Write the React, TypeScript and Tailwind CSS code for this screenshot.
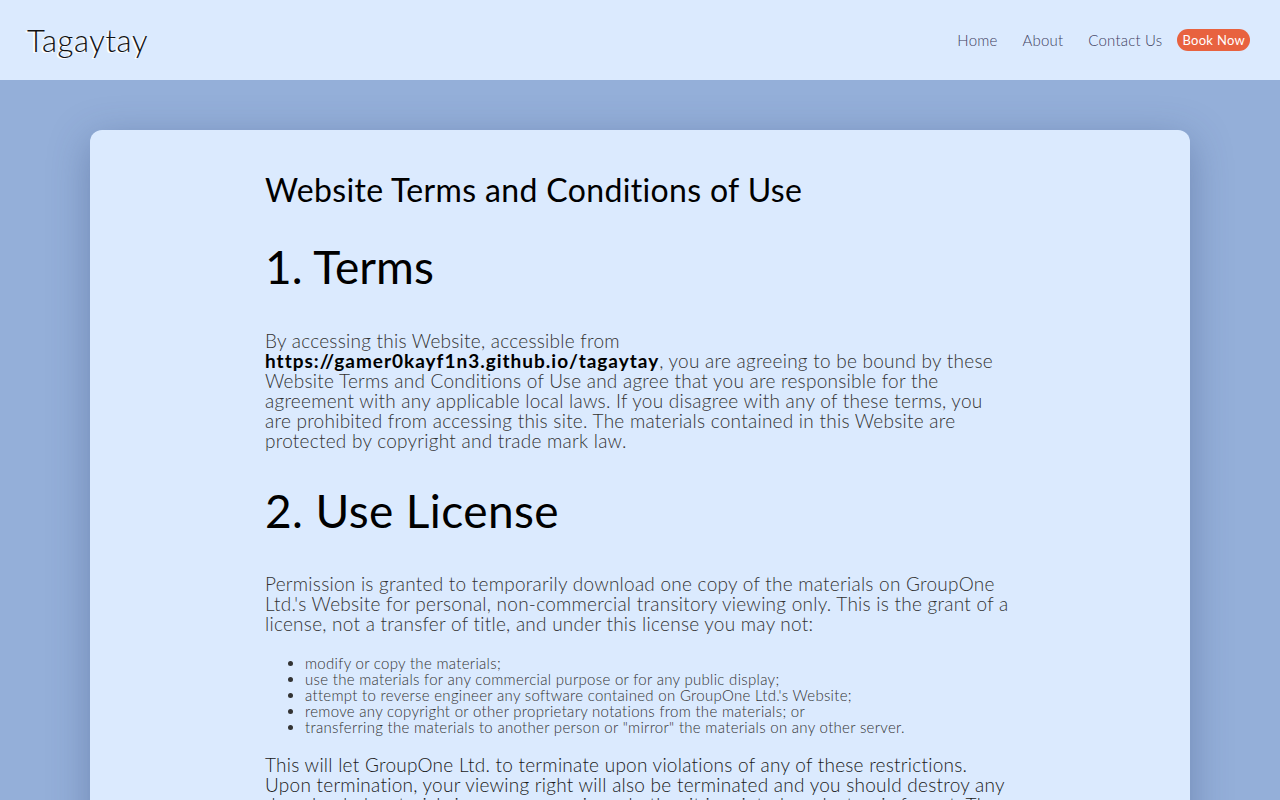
import React from "react";

const items = [
  "modify or copy the materials;",
  "use the materials for any commercial purpose or for any public display;",
  "attempt to reverse engineer any software contained on GroupOne Ltd.'s Website;",
  "remove any copyright or other proprietary notations from the materials; or",
  'transferring the materials to another person or "mirror" the materials on any other server.',
];

export default function App() {
  return (
    <div className="min-h-screen bg-[#94afd9] font-['Lato','Open_Sans',sans-serif] text-black">
      <header className="flex h-[80px] items-center justify-between bg-[#dbeafe] pl-[27px] pr-[30px]">
        <div className="text-[31px] font-light tracking-[0.6px] text-[#111] [text-shadow:-2px_1px_0_#ffffff]">
          Tagaytay
        </div>
        <nav className="flex items-center text-[15px] font-light tracking-[0.2px] text-[#3f3f5f]">
          <a className="mr-[25px]">Home</a>
          <a className="mr-[25px]">About</a>
          <a className="mr-[15px]">Contact Us</a>
          <a className="rounded-full bg-[#e8623f] px-[5px] py-[2px] text-[13px] font-normal leading-[18px] tracking-[0.3px] text-white">
            Book Now
          </a>
        </nav>
      </header>
      <main className="px-[90px] pt-[50px]">
        <div className="rounded-[12px] bg-[#dbeafe] pb-10 pt-[40px] shadow-[0_10px_40px_rgba(40,60,110,0.35)]">
          <div className="mx-auto w-[750px]">
            <h2 className="text-[32px] leading-[40px] tracking-[0.35px] text-black">
              Website Terms and Conditions of Use
            </h2>
            <h1 className="mt-[27px] text-[46px] leading-[60px] tracking-[0.1px] text-black">1. Terms</h1>
            <p className="mt-[34px] whitespace-nowrap text-[19px] font-light leading-[20px] tracking-[0.25px] text-[#333]">
              By accessing this Website, accessible from
              <br />
              <b className="font-bold tracking-[1px] text-black">https://gamer0kayf1n3.github.io/tagaytay</b>, you are
              agreeing to be bound by these
              <br />
              Website Terms and Conditions of Use and agree that you are responsible for the
              <br />
              agreement with any applicable local laws. If you disagree with any of these terms, you
              <br />
              are prohibited from accessing this site. The materials contained in this Website are
              <br />
              protected by copyright and trade mark law.
            </p>
            <h1 className="mt-[30px] text-[46px] leading-[60px] tracking-[0.4px] text-black">2. Use License</h1>
            <p className="mt-[33px] whitespace-nowrap text-[19px] font-light leading-[20px] tracking-[0.25px] text-[#333]">
              Permission is granted to temporarily download one copy of the materials on GroupOne
              <br />
              Ltd.'s Website for personal, non-commercial transitory viewing only. This is the grant of a
              <br />
              license, not a transfer of title, and under this license you may not:
            </p>
            <ul className="mt-[21px] list-disc pl-[40px] text-[15px] font-light leading-[16px] tracking-[0.3px] text-[#333]">
              {items.map((t) => (
                <li key={t}>{t}</li>
              ))}
            </ul>
            <p className="mt-[20px] whitespace-nowrap text-[19px] font-light leading-[20px] tracking-[0.25px] text-[#1a1a1a]">
              This will let GroupOne Ltd. to terminate upon violations of any of these restrictions.
              <br />
              Upon termination, your viewing right will also be terminated and you should destroy any
              <br />
              downloaded materials in your possession whether it is printed or electronic format. These
              <br />
              Terms of Service has been created with the help of the Terms Of Service Generator.
            </p>
          </div>
        </div>
      </main>
    </div>
  );
}
